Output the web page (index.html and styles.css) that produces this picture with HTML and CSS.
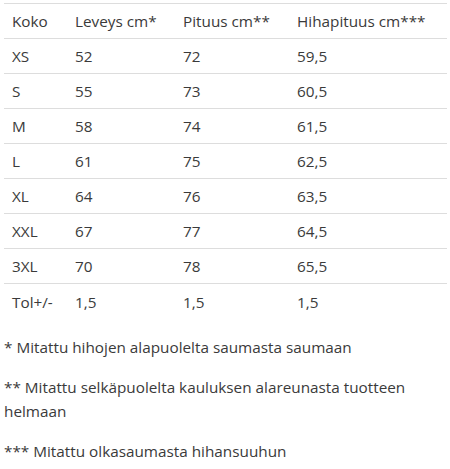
FILE: index.html
```html
<!DOCTYPE html>
<html>
<head>
<meta charset="utf-8">
<link rel="stylesheet" href="styles.css">
</head>
<body>
<div class="wrap">
<table class="sizes">
<colgroup><col class="c1"><col class="c2"><col class="c3"><col class="c4"></colgroup>
<tr><td>Koko</td><td>Leveys cm*</td><td>Pituus cm**</td><td>Hihapituus cm***</td></tr>
<tr><td>XS</td><td>52</td><td>72</td><td>59,5</td></tr>
<tr><td>S</td><td>55</td><td>73</td><td>60,5</td></tr>
<tr><td>M</td><td>58</td><td>74</td><td>61,5</td></tr>
<tr><td>L</td><td>61</td><td>75</td><td>62,5</td></tr>
<tr><td>XL</td><td>64</td><td>76</td><td>63,5</td></tr>
<tr><td>XXL</td><td>67</td><td>77</td><td>64,5</td></tr>
<tr><td>3XL</td><td>70</td><td>78</td><td>65,5</td></tr>
<tr class="last"><td>Tol+/-</td><td>1,5</td><td>1,5</td><td>1,5</td></tr>
</table>
<p class="note">* Mitattu hihojen alapuolelta saumasta saumaan</p>
<p class="note">** Mitattu selkäpuolelta kauluksen alareunasta tuotteen helmaan</p>
<p class="note">*** Mitattu olkasaumasta hihansuuhun</p>
</div>
</body>
</html>
```
FILE: styles.css
```css
html, body { margin: 0; padding: 0; background: #fff; }
body {
  font-family: "Open Sans", "Liberation Sans", sans-serif;
  font-size: 15.3px;
  color: #3a3a3a;
}
.wrap { padding: 3px 3px 0 4px; }
.sizes {
  width: 443px;
  border-collapse: collapse;
  border-top: 1px solid #ddd;
}
.c1 { width: 63px; }
.c2 { width: 108px; }
.c3 { width: 114px; }
.c4 { width: 158px; }
.sizes td {
  padding: 0 8px;
  height: 34px;
  border-bottom: 1px solid #ddd;
  vertical-align: middle;
  line-height: 20px;
}
.sizes tr.last td { border-bottom: none; height: 35px; }
.note {
  margin: 16px 0 0 0;
  line-height: 24px;
}
```
